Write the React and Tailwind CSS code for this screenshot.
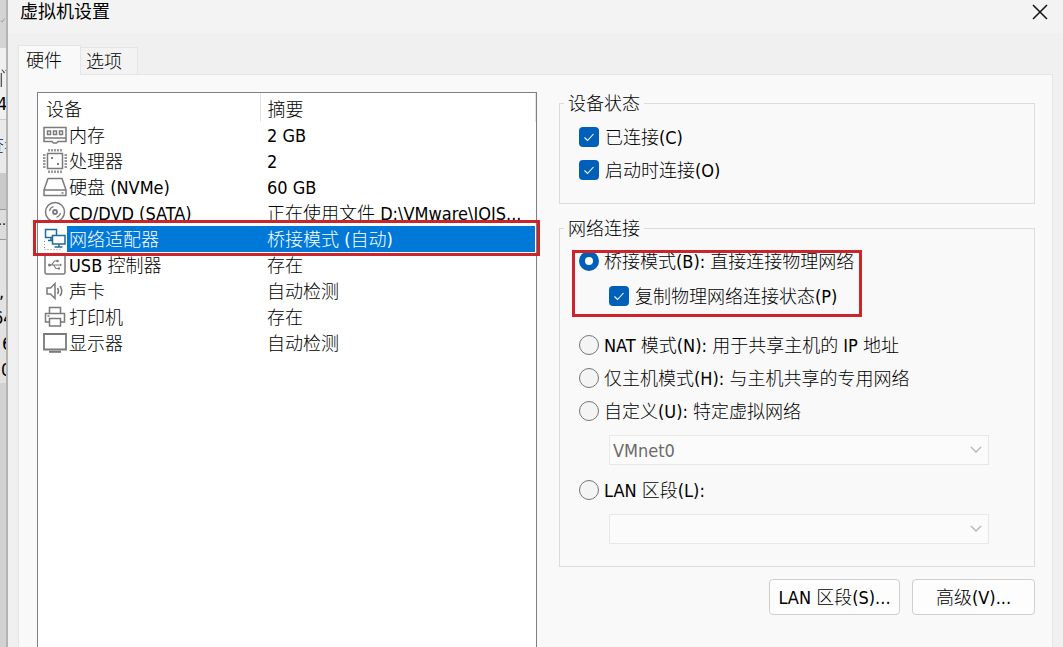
import React from 'react';

const ICON_COLOR = '#7a7a7a';

const Icon = ({ children, color = ICON_COLOR }) => (
  <svg width="24" height="24" viewBox="0 0 24 24" fill="none" stroke={color} strokeWidth="1.5" className="shrink-0" aria-hidden="true">
    {children}
  </svg>
);

const MemoryIcon = () => (
  <Icon>
    <path d="M1 4.5h22v14h-8l-1.5 1.5h-3L9 18.5H1zM1 15h22" />
    <path d="M4.5 8h3v3.5h-3zM10.5 8h3v3.5h-3zM16.5 8h3v3.5h-3z" />
  </Icon>
);

const CpuIcon = () => (
  <Icon>
    <path d="M4.5 4.5h15v15h-15z" />
    <path d="M6 0v2.5M9 0v2.5M12 0v2.5M15 0v2.5M18 0v2.5M6 21.5V24M9 21.5V24M12 21.5V24M15 21.5V24M18 21.5V24M0 6h2.5M0 9h2.5M0 12h2.5M0 15h2.5M0 18h2.5M21.5 6H24M21.5 9H24M21.5 12H24M21.5 15H24M21.5 18H24" />
    <path d="M8 9h2M14 15h2" strokeWidth="2" />
  </Icon>
);

const DiskIcon = () => (
  <Icon>
    <path d="M5 3.5h14l4 11.5H1zM1 15h22v5.5H1zM18.5 18h2" strokeLinejoin="round" />
  </Icon>
);

const DiscIcon = () => (
  <Icon>
    <circle cx="12" cy="11" r="9.5" />
    <circle cx="12" cy="11" r="2" strokeWidth="1.8" />
    <path d="M6.5 10a5.5 5.5 0 0 1 4-4.3M17.5 12a5.5 5.5 0 0 1-4 4.3" strokeWidth="1.2" />
  </Icon>
);

const NetworkIcon = () => (
  <Icon color="#1f6a9c">
    <path d="M2.5 2.5h11v8h-11zM8 10.5v3M5 13.5h5" />
    <path d="M9.5 8.5H22V17H9.5z" fill="#fff" />
    <path d="M16 17v3M11.5 20h8" />
    <path d="M1.5 14v8M1.5 22.5h18" stroke="#8a8a8a" strokeWidth="1" strokeDasharray="1 2" />
  </Icon>
);

const UsbIcon = () => (
  <Icon>
    <rect x="2" y="2" width="20" height="19" rx="1.5" />
    <path d="M6 12h12M8.5 12l3-4H14M10.5 12l2.5 3.5h2.5" strokeWidth="1.2" />
    <circle cx="6.5" cy="12" r="1.5" fill={ICON_COLOR} stroke="none" />
    <circle cx="14.5" cy="8" r="1.3" fill={ICON_COLOR} stroke="none" />
    <path d="M15 14.5h2v2h-2zM17 10.5l2 1.5-2 1.5z" fill={ICON_COLOR} stroke="none" />
  </Icon>
);

const SoundIcon = () => (
  <Icon>
    <path d="M4 9h3.5L12 4.5v15L7.500 15H4z" />
    <path d="M14.5 9q2 3 0 6M17 7q3.5 5 0 10" />
  </Icon>
);

const PrinterIcon = () => (
  <Icon>
    <path d="M6.5 8.5v-6h11v6M6.5 17h-4V8.5h19V17h-4" />
    <path d="M6.5 13.5h11V21h-11zM4.5 11h2" />
  </Icon>
);

const DisplayIcon = () => (
  <Icon>
    <path d="M1 3h22v15.5H1z" strokeWidth="1.8" />
    <path d="M6 20.8h12" strokeWidth="2" />
  </Icon>
);

const DEVICES = [
  { name: '内存', summary: '2 GB', icon: MemoryIcon },
  { name: '处理器', summary: '2', icon: CpuIcon },
  { name: '硬盘 (NVMe)', summary: '60 GB', icon: DiskIcon },
  { name: 'CD/DVD (SATA)', summary: '正在使用文件 D:\\VMware\\IOIS...', icon: DiscIcon },
  { name: '网络适配器', summary: '桥接模式 (自动)', icon: NetworkIcon, selected: true },
  { name: 'USB 控制器', summary: '存在', icon: UsbIcon },
  { name: '声卡', summary: '自动检测', icon: SoundIcon },
  { name: '打印机', summary: '存在', icon: PrinterIcon },
  { name: '显示器', summary: '自动检测', icon: DisplayIcon },
];

const DeviceTable = () => (
  <table className="w-full table-fixed border-collapse text-left">
    <thead>
      <tr className="h-[29px]">
        <th className="w-[222px] border-r border-[#e5e5e5] p-0 pl-2 pt-1 font-light">设备</th>
        <th className="border-r border-[#e5e5e5] p-0 pl-[7px] pt-1 font-light">摘要</th>
      </tr>
    </thead>
    <tbody>
      {DEVICES.map(({ name, summary, icon: DeviceIcon, selected }) => (
        <tr key={name} className={selected ? 'relative h-[26px] text-white' : 'h-[26px]'}>
          <td className="p-0 pl-[5px]">
            <div className="flex h-[26px] items-center">
              <DeviceIcon />
              <span className={`flex-1 whitespace-nowrap pt-0.5 pl-[2px] leading-6 ${selected ? 'bg-[#0078d7]' : ''}`}>{name}</span>
            </div>
            {selected && (
              <div className="pointer-events-none absolute -top-[6px] -right-[5px] -bottom-1 -left-[5px] border-3 border-[#cb242b]" />
            )}
          </td>
          <td className={`overflow-hidden whitespace-nowrap p-0 pt-0.5 pl-[7px] leading-6 ${selected ? 'bg-[#0078d7]' : ''}`}>{summary}</td>
        </tr>
      ))}
    </tbody>
  </table>
);

const Checkbox = ({ label, className = '' }) => (
  <label className={`flex items-center gap-[6px] ${className}`}>
    <span className="grid shrink-0">
      <input type="checkbox" defaultChecked className="col-start-1 row-start-1 size-5 appearance-none rounded bg-[#005fb8]" />
      <svg viewBox="0 0 20 20" className="pointer-events-none col-start-1 row-start-1 size-5" fill="none" stroke="#fff" strokeWidth="1.1">
        <path d="M5.5 10.5l3 3 6-6.5" />
      </svg>
    </span>
    <span className="whitespace-nowrap pt-0.5">{label}</span>
  </label>
);

const Radio = ({ label, defaultChecked }) => (
  <label className="flex h-[33px] items-center gap-[5px]">
    <input
      type="radio"
      name="network"
      defaultChecked={defaultChecked}
      className="size-5 shrink-0 appearance-none rounded-full border border-[#767676] bg-[#f4f4f4] checked:border-6 checked:border-[#005fb8] checked:bg-white"
    />
    <span className="whitespace-nowrap pt-0.5">{label}</span>
  </label>
);

const Select = ({ label, value }) => (
  <div className="mt-2 mr-[26px] ml-[30px] grid items-center">
    <select
      disabled
      aria-label={label}
      className="col-start-1 row-start-1 h-[30px] w-full appearance-none border border-[#e8e8e8] bg-[#fbfbfb] pt-0.5 pl-[3px] text-[#6b6b6b] opacity-100"
    >
      <option>{value}</option>
    </select>
    <svg viewBox="0 0 12 8" className="pointer-events-none col-start-1 row-start-1 mr-[7px] h-2 w-3 justify-self-end" fill="none" stroke="#b5b5b5" strokeWidth="1.3">
      <path d="M1 1l5 5 5-5" />
    </svg>
  </div>
);

const Button = ({ children, className }) => (
  <button type="button" className={`h-9 rounded border border-[#cfcfcf] bg-[#fdfdfd] pt-0.5 ${className}`}>
    {children}
  </button>
);

const Legend = ({ children }) => (
  <legend className="-ml-[15px] px-1 pt-0.5 leading-5">{children}</legend>
);

// Sliver of the window that sits behind the dialog
const BackgroundWindow = () => (
  <div className="flex w-2 shrink-0 flex-col overflow-hidden border-r-2 border-[#b4b4b4] bg-[#d2d2d2] whitespace-nowrap" aria-hidden="true">
    <div className="flex h-12 items-start justify-end bg-[#d4d4d4] pt-4">
      <svg width="8" height="8" viewBox="0 0 8 8" fill="none" stroke="#888">
        <path d="M1 5l2 1.5L6 2" />
      </svg>
    </div>
    <div className="h-[72px] border-b border-[#ccc] bg-[#f0f0f0] pt-[18px] leading-[25px]">
      <div className="-ml-px">门</div>
      <div className="-ml-[3px]">4</div>
    </div>
    <div className="h-[53px] bg-[#e9e9e9] pt-[15px] text-[#0a1a4a]">
      <div className="-ml-[14px]">查看</div>
    </div>
    <div className="h-[37px] border-b border-[#999] bg-[#cacaca]" />
    <div className="h-[30px] border-b border-[#999] bg-[#dcdcdc]">
      <div className="-ml-[2px] text-sm">...</div>
    </div>
    <div className="h-[143px] bg-[#e2e2e2] pt-[39px] leading-[26px]">
      <div className="-ml-px">,</div>
      <div className="-ml-[7px]">64</div>
      <div className="pl-[2px]">6</div>
      <div className="pl-px">0</div>
    </div>
  </div>
);

const App = () => {
  return (
    <div className="flex h-screen min-h-[640px] overflow-hidden bg-[#f0f0f0] font-['DejaVu_Sans_Condensed','Noto_Sans_CJK_SC',sans-serif] text-[18px] leading-[22px] font-light text-black">
      <BackgroundWindow />
      <main className="flex min-w-0 flex-1 flex-col">
        <header className="flex h-[33px] items-start justify-between bg-[#f3f3f3] pr-[15px] pl-3">
          <h1 className="pt-px font-normal">虚拟机设置</h1>
          <button type="button" aria-label="关闭" className="mt-1">
            <svg width="16" height="16" viewBox="0 0 16 16" stroke="#111" strokeWidth="1.5">
              <path d="M1 1l14 14M15 1L1 15" />
            </svg>
          </button>
        </header>

        <div role="tablist" className="z-10 -mb-px ml-[10px] flex items-end pt-3">
          <button type="button" role="tab" aria-selected="true" className="h-[30px] w-[63px] border border-b-0 border-[#e5e5e5] bg-[#f9f9f9] pl-[7px] text-left">
            硬件
          </button>
          <button type="button" role="tab" aria-selected="false" className="h-[28px] w-[57px] border border-l-0 border-[#e5e5e5] bg-[#f3f3f3] pt-0.5 pl-[5px] text-left">
            选项
          </button>
        </div>

        <div className="mr-[10px] ml-[10px] flex min-h-0 flex-1 gap-[22px] border-x border-t border-[#e5e5e5] bg-[#f9f9f9] pt-[17px] pr-[17px] pl-[18px]">
          <section className="min-w-0 flex-[499_1_0%] border-x border-t border-[#7d8086] bg-white">
            <DeviceTable />
          </section>

          <section className="min-w-0 flex-[477_1_0%]">
            <fieldset className="border border-[#dcdcdc] pt-[6px] pr-[19px] pb-[17px] pl-[19px]">
              <Legend>设备状态</Legend>
              <Checkbox label="已连接(C)" className="h-[33px]" />
              <Checkbox label="启动时连接(O)" className="h-[33px]" />
            </fieldset>

            <fieldset className="mt-[13px] border border-[#dcdcdc] px-[19px] pt-[5px] pb-[22px]">
              <Legend>网络连接</Legend>
              <div className="relative mb-[13px]">
                <Radio label="桥接模式(B): 直接连接物理网络" defaultChecked />
                <Checkbox label="复制物理网络连接状态(P)" className="ml-[30px] h-[38px]" />
                <div className="pointer-events-none absolute top-[6px] -bottom-[2px] -left-[7px] w-[290px] border-3 border-[#cb242b]" />
              </div>
              <Radio label="NAT 模式(N): 用于共享主机的 IP 地址" />
              <Radio label="仅主机模式(H): 与主机共享的专用网络" />
              <Radio label="自定义(U): 特定虚拟网络" />
              <Select label="特定虚拟网络" value="VMnet0" />
              <div className="mt-2">
                <Radio label="LAN 区段(L):" />
              </div>
              <Select label="LAN 区段" value="" />
            </fieldset>

            <div className="mt-3 flex justify-end gap-3">
              <Button className="w-[131px]">LAN 区段(S)...</Button>
              <Button className="w-[123px]">高级(V)...</Button>
            </div>
          </section>
        </div>
      </main>
    </div>
  );
};

export default App;
